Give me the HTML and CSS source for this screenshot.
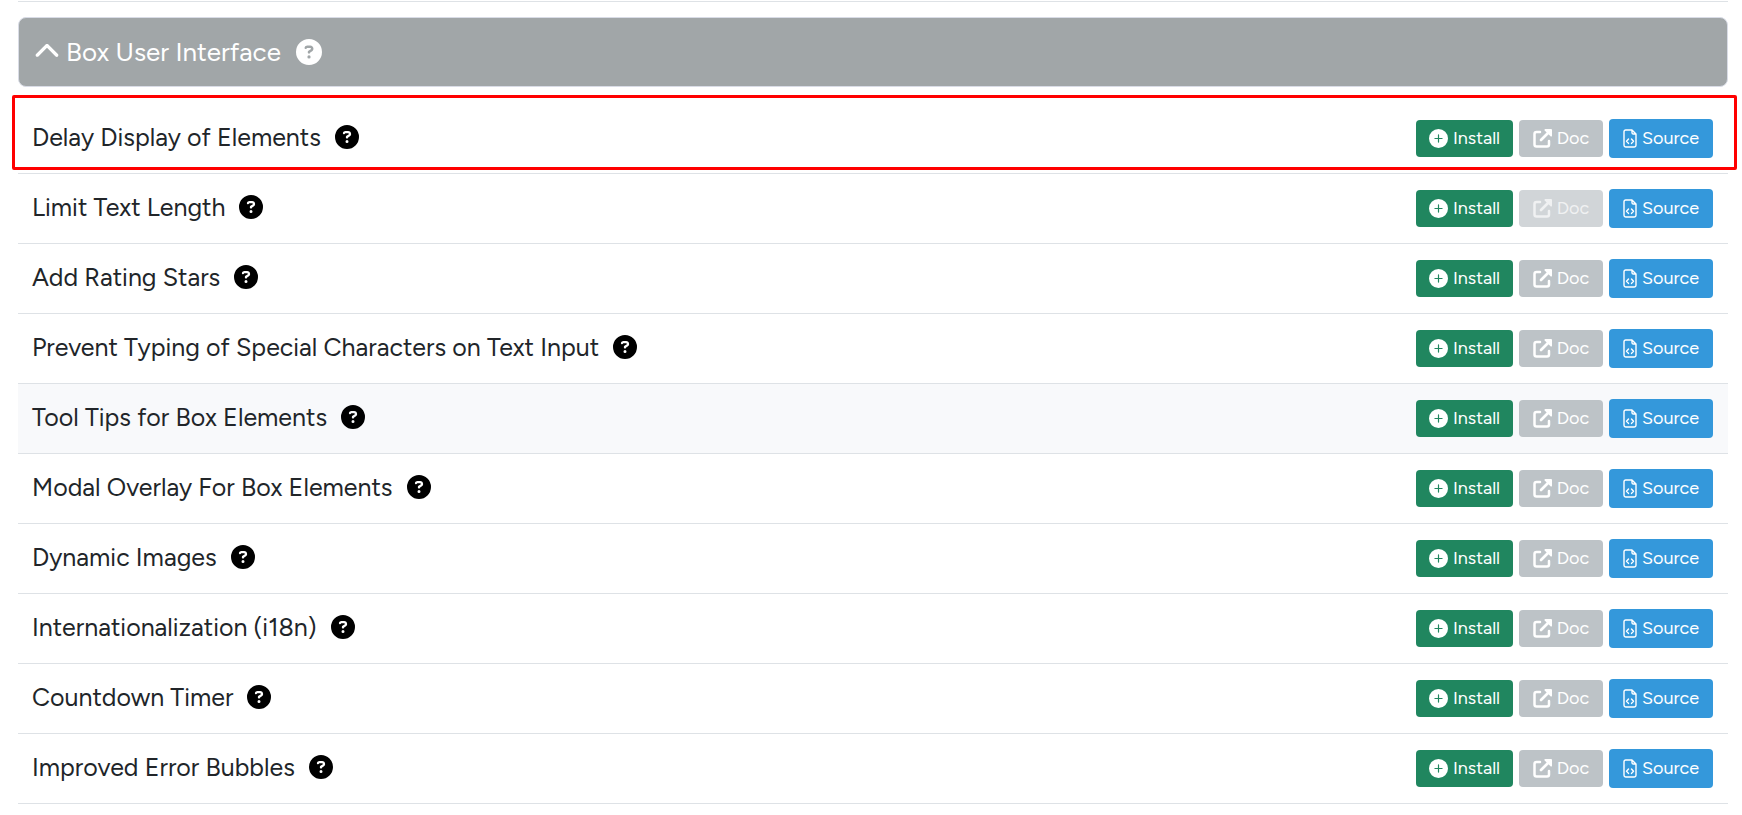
FILE: index.html
```
<!DOCTYPE html>
<html lang="en">

<head>
    <meta charset="UTF-8">
    <title>Box User Interface</title>
    <link rel="stylesheet" href="styles.css">
</head>

<body>

    <!-- icon shapes shared by all rows -->
    <svg class="sprite" aria-hidden="true">
        <symbol id="chevron" viewBox="0 0 512 512">
            <path d="M233.4 105.4c12.5-12.5 32.8-12.5 45.3 0l192 192c12.5 12.5 12.5 32.8 0 45.3s-32.8 12.5-45.3 0L256 173.3 86.6 342.6c-12.5 12.5-32.8 12.5-45.3 0s-12.5-32.8 0-45.3l192-192z"/>
        </symbol>
        <symbol id="question" viewBox="0 0 512 512">
            <path d="M256 512A256 256 0 1 0 256 0a256 256 0 1 0 0 512zM169.8 165.3c7.9-22.3 29.1-37.3 52.8-37.3h58.3c34.9 0 63.1 28.3 63.1 63.1c0 22.6-12.1 43.5-31.7 54.8L280 264.4c-.2 13-10.9 23.6-24 23.6c-13.3 0-24-10.7-24-24V250.5c0-8.6 4.6-16.5 12.1-20.8l44.3-25.4c4.7-2.7 7.6-7.7 7.6-13.1c0-8.4-6.8-15.1-15.1-15.1H222.6c-3.4 0-6.4 2.1-7.5 5.3l-.4 1.2c-4.4 12.5-18.2 19-30.6 14.6s-19-18.2-14.6-30.6l.4-1.2zM224 352a32 32 0 1 1 64 0 32 32 0 1 1 -64 0z"/>
        </symbol>
        <symbol id="plus" viewBox="0 0 16 16">
            <path d="M16 8A8 8 0 1 1 0 8a8 8 0 0 1 16 0M8.5 5a.5.5 0 0 0-1 0v2.500h-2.500a.5.5 0 0 0 0 1h2.500v2.500a.5.5 0 0 0 1 0v-2.500h2.500a.5.5 0 0 0 0-1h-2.500z"/>
        </symbol>
        <symbol id="external" viewBox="0 0 19 19">
            <path d="M7 3H3.500Q1.500 3 1.500 5v10.500q0 2 2 2H14q2 0 2-2V12" fill="none" stroke="currentColor" stroke-width="2.500" stroke-linecap="round"/>
            <path d="M8 11L16 3" fill="none" stroke="currentColor" stroke-width="2.700" stroke-linecap="round"/>
            <path d="M12 0H18q1 0 1 1v6q-.5 1-1.500.3L11.700 1.500Q11 .5 12 0z"/>
        </symbol>
        <symbol id="code" viewBox="0 0 14 19">
            <path d="M9 1H2.700Q1 1 1 2.700v13.600Q1 18 2.700 18h8.600q1.700 0 1.700-1.700V5zM9 1v2.700Q9 5 10.300 5H13M5.500 10L3.500 12.200l2 2.200M8.500 10l2 2.200-2 2.200" fill="none" stroke="currentColor" stroke-width="1.400" stroke-linejoin="round" stroke-linecap="round"/>
        </symbol>
    </svg>

    <main>
        <header>
            <button class="toggle" type="button" aria-expanded="true">
                <svg class="icon-chevron"><use href="#chevron"/></svg>
                Box User Interface
            </button>
            <button class="help" type="button" aria-label="Help"><svg><use href="#question"/></svg></button>
        </header>

        <ul class="list">
            <li class="row selected">
                <span>Delay Display of Elements</span>
                <button class="help" type="button" aria-label="Help"><svg><use href="#question"/></svg></button>
                <div class="actions">
                    <button class="btn install" type="button"><svg><use href="#plus"/></svg>Install</button>
                    <a class="btn doc" href="#"><svg><use href="#external"/></svg>Doc</a>
                    <a class="btn source" href="#"><svg><use href="#code"/></svg>Source</a>
                </div>
            </li>
            <li class="row">
                <span>Limit Text Length</span>
                <button class="help" type="button" aria-label="Help"><svg><use href="#question"/></svg></button>
                <div class="actions">
                    <button class="btn install" type="button"><svg><use href="#plus"/></svg>Install</button>
                    <a class="btn doc disabled" href="#" aria-disabled="true"><svg><use href="#external"/></svg>Doc</a>
                    <a class="btn source" href="#"><svg><use href="#code"/></svg>Source</a>
                </div>
            </li>
            <li class="row">
                <span>Add Rating Stars</span>
                <button class="help" type="button" aria-label="Help"><svg><use href="#question"/></svg></button>
                <div class="actions">
                    <button class="btn install" type="button"><svg><use href="#plus"/></svg>Install</button>
                    <a class="btn doc" href="#"><svg><use href="#external"/></svg>Doc</a>
                    <a class="btn source" href="#"><svg><use href="#code"/></svg>Source</a>
                </div>
            </li>
            <li class="row">
                <span>Prevent Typing of Special Characters on Text Input</span>
                <button class="help" type="button" aria-label="Help"><svg><use href="#question"/></svg></button>
                <div class="actions">
                    <button class="btn install" type="button"><svg><use href="#plus"/></svg>Install</button>
                    <a class="btn doc" href="#"><svg><use href="#external"/></svg>Doc</a>
                    <a class="btn source" href="#"><svg><use href="#code"/></svg>Source</a>
                </div>
            </li>
            <li class="row active">
                <span>Tool Tips for Box Elements</span>
                <button class="help" type="button" aria-label="Help"><svg><use href="#question"/></svg></button>
                <div class="actions">
                    <button class="btn install" type="button"><svg><use href="#plus"/></svg>Install</button>
                    <a class="btn doc" href="#"><svg><use href="#external"/></svg>Doc</a>
                    <a class="btn source" href="#"><svg><use href="#code"/></svg>Source</a>
                </div>
            </li>
            <li class="row">
                <span>Modal Overlay For Box Elements</span>
                <button class="help" type="button" aria-label="Help"><svg><use href="#question"/></svg></button>
                <div class="actions">
                    <button class="btn install" type="button"><svg><use href="#plus"/></svg>Install</button>
                    <a class="btn doc" href="#"><svg><use href="#external"/></svg>Doc</a>
                    <a class="btn source" href="#"><svg><use href="#code"/></svg>Source</a>
                </div>
            </li>
            <li class="row">
                <span>Dynamic Images</span>
                <button class="help" type="button" aria-label="Help"><svg><use href="#question"/></svg></button>
                <div class="actions">
                    <button class="btn install" type="button"><svg><use href="#plus"/></svg>Install</button>
                    <a class="btn doc" href="#"><svg><use href="#external"/></svg>Doc</a>
                    <a class="btn source" href="#"><svg><use href="#code"/></svg>Source</a>
                </div>
            </li>
            <li class="row">
                <span>Internationalization (i18n)</span>
                <button class="help" type="button" aria-label="Help"><svg><use href="#question"/></svg></button>
                <div class="actions">
                    <button class="btn install" type="button"><svg><use href="#plus"/></svg>Install</button>
                    <a class="btn doc" href="#"><svg><use href="#external"/></svg>Doc</a>
                    <a class="btn source" href="#"><svg><use href="#code"/></svg>Source</a>
                </div>
            </li>
            <li class="row">
                <span>Countdown Timer</span>
                <button class="help" type="button" aria-label="Help"><svg><use href="#question"/></svg></button>
                <div class="actions">
                    <button class="btn install" type="button"><svg><use href="#plus"/></svg>Install</button>
                    <a class="btn doc" href="#"><svg><use href="#external"/></svg>Doc</a>
                    <a class="btn source" href="#"><svg><use href="#code"/></svg>Source</a>
                </div>
            </li>
            <li class="row">
                <span>Improved Error Bubbles</span>
                <button class="help" type="button" aria-label="Help"><svg><use href="#question"/></svg></button>
                <div class="actions">
                    <button class="btn install" type="button"><svg><use href="#plus"/></svg>Install</button>
                    <a class="btn doc" href="#"><svg><use href="#external"/></svg>Doc</a>
                    <a class="btn source" href="#"><svg><use href="#code"/></svg>Source</a>
                </div>
            </li>
        </ul>
    </main>

</body>

</html>
```
FILE: styles.css
```
* {
    box-sizing: border-box;
}

body {
    margin: 0;
    padding: 1px 14px 0 18px;
    background-color: #fff;
    color: #212529;
    font-family: Figtree, Lato, sans-serif;
    font-size: 25px;
    line-height: 36px;
}

.sprite {
    display: none;
}

svg {
    display: block;
    flex: none;
    fill: currentColor;
}

button {
    font-family: inherit;
    cursor: pointer;
}

main {
    border-top: 1px solid #dee2e6;
    padding-top: 15px;
}

header {
    display: flex;
    align-items: center;
    gap: 15px;
    padding: 16px 15px;
    background-color: #a1a6a8;
    border: 1px solid #d9dce6;
    border-radius: 8px;
    color: #fff;
}

.toggle {
    display: flex;
    align-items: center;
    gap: 6px;
    padding: 0;
    border: 0;
    background: none;
    color: inherit;
    font-size: 26px;
    line-height: 36px;
}

.icon-chevron {
    width: 26px;
    height: 26px;
}

.help {
    padding: 0;
    border: 0;
    background: none;
    color: #000;
}

.help svg {
    width: 24px;
    height: 24px;
}

header .help {
    color: #fff;
}

header .help svg {
    width: 26px;
    height: 26px;
}

.list {
    list-style: none;
    margin: 17px 0 0;
    padding: 0;
}

.row {
    position: relative;
    display: flex;
    align-items: center;
    gap: 14px;
    padding: 15px 15px 15px 14px;
    border-bottom: 1px solid #dee2e6;
}

.row > span,
.row > .help {
    padding-bottom: 3px;
}

.active {
    background-color: #f8f9fb;
}

/* red frame around the selected row, a bit wider than the row itself */
.selected::after {
    content: "";
    position: absolute;
    top: -9px;
    right: -9px;
    bottom: 3px;
    left: -6px;
    border: 3px solid #f00;
    border-radius: 2px;
    pointer-events: none;
}

.actions {
    display: flex;
    align-items: center;
    gap: 6px;
    margin-left: auto;
}

.btn {
    display: flex;
    align-items: center;
    justify-content: center;
    gap: 5px;
    height: 37px;
    border: 0;
    border-radius: 4px;
    padding: 0;
    color: #fff;
    font-size: 18px;
    line-height: 27px;
    text-decoration: none;
}

.btn svg {
    width: 19px;
    height: 19px;
}

.install {
    width: 97px;
    background-color: #20865f;
}

.doc {
    width: 84px;
    background-color: #bdc3c7;
}

.disabled {
    background-color: #d1d5d8;
    color: #f0f1f2;
}

.source {
    width: 104px;
    height: 39px;
    background-color: #3498db;
}

.source svg {
    width: 14px;
}
```
